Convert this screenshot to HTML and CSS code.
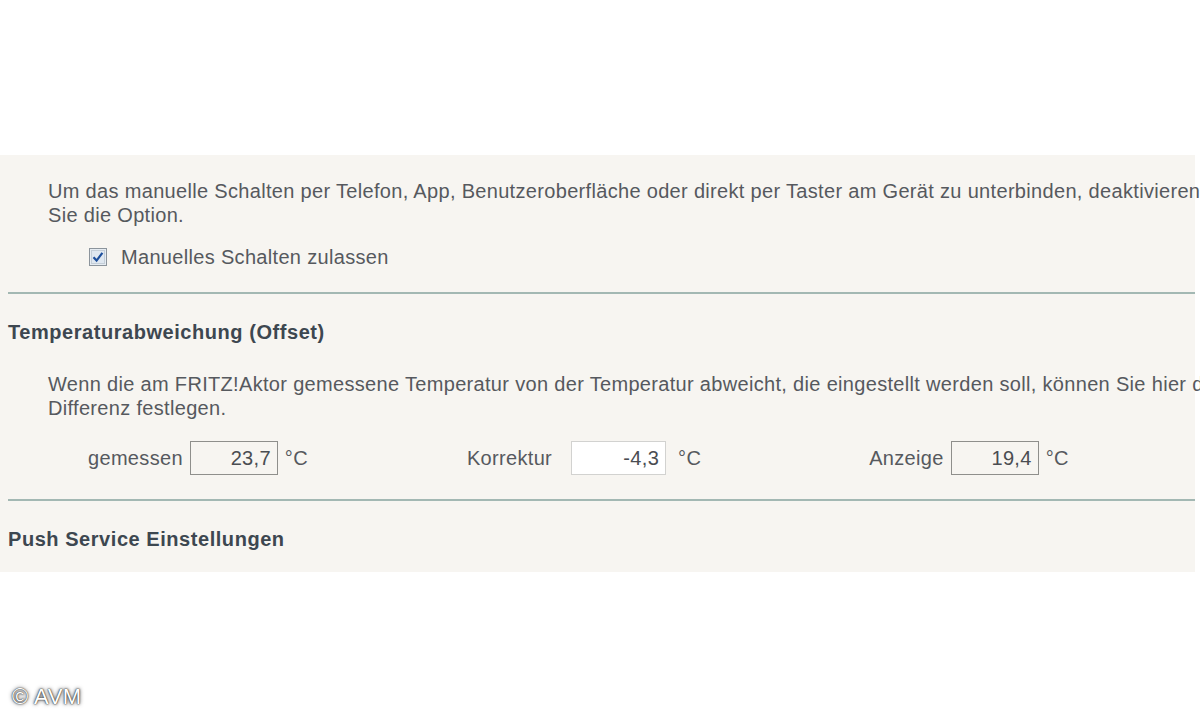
FILE: index.html
```html
<!doctype html>
<html lang="de">
	<head>
		<title>FRITZ!Aktor Einstellungen</title>
		<meta charset="utf-8" />
		<link rel="stylesheet" href="styles.css">
	</head>

	<body>
        <div class="top"></div>

        <div class="panel">
            <p class="text">Um das manuelle Schalten per Telefon, App, Benutzeroberfläche oder direkt per Taster am Gerät zu unterbinden, deaktivieren<br>Sie die Option.</p>

            <label class="check">
                <svg class="box" width="18" height="18" viewBox="0 0 18 18">
                    <rect x="0.5" y="0.5" width="17" height="17" fill="#e6ecf2" stroke="#8c949c" />
                    <rect x="2.5" y="2.5" width="13" height="13" fill="#dfe7f0" stroke="#c4ced8" />
                    <path d="M4.5 9.2 L7.6 12.6 L13.4 4.8" fill="none" stroke="#1d4f9c" stroke-width="2.2" />
                </svg>
                <span>Manuelles Schalten zulassen</span>
            </label>

            <div class="rule"></div>

            <h2>Temperaturabweichung (Offset)</h2>

            <p class="text">Wenn die am FRITZ!Aktor gemessene Temperatur von der Temperatur abweicht, die eingestellt werden soll, können Sie hier die<br>Differenz festlegen.</p>

            <div class="fields">
                <div class="field f1">
                    <span class="lbl">gemessen</span>
                    <span class="inp ro">23,7</span>
                    <span class="unit">°C</span>
                </div>
                <div class="field f2">
                    <span class="lbl">Korrektur</span>
                    <span class="inp edit">-4,3</span>
                    <span class="unit">°C</span>
                </div>
                <div class="field f3">
                    <span class="lbl">Anzeige</span>
                    <span class="inp ro">19,4</span>
                    <span class="unit">°C</span>
                </div>
            </div>

            <div class="rule second"></div>

            <h2 class="last">Push Service Einstellungen</h2>
        </div>

        <div class="credit">© AVM</div>
	</body>
</html>
```

FILE: styles.css
```css
body {
    margin: 0;
    padding: 0;
    background: #ffffff;
    font-family: "Liberation Sans", Arial, sans-serif;
    font-size: 20px;
    letter-spacing: 0.32px;
    color: #56595e;
    overflow: hidden;
    height: 720px;
    position: relative;
}

.top {
    height: 155px;
}

.panel {
    background: #f7f5f1;
    padding: 24px 0 11px 0;
    width: 1195px;
}

.text {
    margin: 0 0 0 48px;
    line-height: 24px;
    white-space: nowrap;
}

.check {
    display: flex;
    align-items: center;
    gap: 14px;
    margin: 18px 0 0 89px;
    line-height: 24px;
}

.check .box {
    display: block;
}

.rule {
    height: 2px;
    background: #a3b8b3;
    margin: 23px 0 0 8px;
}

.rule.second {
    margin-top: 24px;
}

h2 {
    margin: 26px 0 28px 8px;
    font-size: 20px;
    letter-spacing: 0.55px;
    line-height: 24px;
    font-weight: bold;
    color: #3d4750;
}

h2.last {
    margin-top: 26px;
    margin-bottom: 10px;
}

.fields {
    display: flex;
    align-items: center;
    margin-top: 21px;
}

.field {
    display: flex;
    align-items: center;
}

.f1 { margin-left: 88px; }
.f2 { margin-left: 159px; }
.f3 { margin-left: 168px; }

.lbl {
    margin-right: 7px;
}

.f2 .lbl {
    margin-right: 19px;
}

.inp {
    box-sizing: border-box;
    height: 34px;
    line-height: 32px;
    text-align: right;
    padding-right: 6px;
    color: #4a4d52;
}

.inp.ro {
    width: 88px;
    border: 1px solid #8f8f8c;
    background: #f7f5f1;
}

.inp.edit {
    width: 95px;
    border: 1px solid #d2d2d0;
    background: #ffffff;
}

.unit {
    margin-left: 7px;
}

.f2 .unit {
    margin-left: 12px;
}

.credit {
    position: absolute;
    left: 12px;
    top: 684px;
    font-size: 22px;
    letter-spacing: 0.5px;
    color: #ffffff;
    text-shadow: 0 0 4px #444, 0 0 2px #444, 0 0 1px #222;
}
```
